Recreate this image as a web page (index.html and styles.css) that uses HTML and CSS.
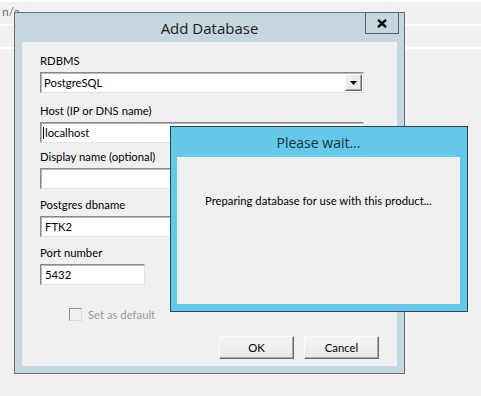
FILE: index.html
```html
<!DOCTYPE html>
<html>
<head>
<meta charset="utf-8">
<link rel="stylesheet" href="styles.css">
</head>
<body>
<div class="desktop">
  <div class="grid-bg">
    <div class="grid-row"><span class="cell-text">n/a</span></div>
    <div class="grid-row"></div>
    <div class="grid-row"></div>
  </div>

  <div class="window add-db">
    <div class="titlebar">
      <span class="title">Add Database</span>
      <span class="close-btn">
        <svg width="10" height="9" viewBox="0 0 10 9"><path d="M1 0.8 L9 8.2 M9 0.8 L1 8.2" stroke="#000" stroke-width="2.3" fill="none"/></svg>
      </span>
    </div>
    <div class="client">
      <div class="field">
        <span class="label">RDBMS</span>
        <div class="combo">
          <span class="combo-text">PostgreSQL</span>
          <span class="drop-btn"><svg width="7" height="4" viewBox="0 0 7 4"><polygon points="0,0 7,0 3.5,4" fill="#000"/></svg></span>
        </div>
      </div>
      <div class="field">
        <span class="label">Host (IP or DNS name)</span>
        <div class="input"><span class="caret"></span>localhost</div>
      </div>
      <div class="field">
        <span class="label">Display name (optional)</span>
        <div class="input"></div>
      </div>
      <div class="field">
        <span class="label">Postgres dbname</span>
        <div class="input">FTK2</div>
      </div>
      <div class="field">
        <span class="label">Port number</span>
        <div class="input input-short">5432</div>
      </div>
      <div class="check-row">
        <span class="checkbox"></span>
        <span class="check-label">Set as default</span>
      </div>
      <div class="buttons">
        <span class="btn">OK</span>
        <span class="btn">Cancel</span>
      </div>
    </div>
  </div>

  <div class="window wait">
    <div class="titlebar wait-titlebar">
      <span class="title wait-title">Please wait...</span>
    </div>
    <div class="client wait-client">
      <span class="message">Preparing database for use with this product...</span>
    </div>
  </div>
</div>
</body>
</html>
```
FILE: styles.css
```css
html, body {
  margin: 0;
  padding: 0;
}

.desktop {
  position: relative;
  width: 481px;
  height: 396px;
  overflow: hidden;
  background: #f0f0f0;
  font-family: "Lato", "Open Sans", sans-serif;
  font-size: 11.3px;
  color: #000;
}

/* background grid rows */
.grid-bg {
  display: flex;
  flex-direction: column;
}

.grid-row {
  height: 24px;
  box-sizing: border-box;
  border-top: 2px solid #ffffff;
}

.grid-row:nth-child(2),
.grid-row:nth-child(3) {
  height: 23px;
}

.cell-text {
  display: block;
  padding: 2px 0 0 2px;
  line-height: 16px;
  font-size: 12px;
  color: #6d6d6d;
}

/* windows */
.window {
  position: absolute;
  box-sizing: border-box;
  display: flex;
  flex-direction: column;
}

.add-db {
  left: 14px;
  top: 12px;
  width: 391px;
  height: 362px;
  border: 1px solid #6a6e70;
  background: #c4d7df;
  padding: 0 7px 7px 7px;
}

.titlebar {
  position: relative;
  height: 29px;
  flex: none;
  display: flex;
  align-items: center;
  justify-content: center;
}

.title {
  font-family: "Open Sans", "Noto Sans", sans-serif;
  font-size: 15px;
  line-height: 20px;
  color: #1c1c1c;
  margin-top: 1px;
}

.close-btn {
  position: absolute;
  right: -2px;
  top: -1px;
  width: 34px;
  height: 22px;
  box-sizing: border-box;
  border: 1px solid #5c6163;
  display: flex;
  align-items: center;
  justify-content: center;
}

.close-btn svg {
  display: block;
  margin-top: 1px;
}

.client {
  flex: 1;
  background: #f0f0f0;
  display: flex;
  flex-direction: column;
  padding: 11px 18px 7px 18px;
}

.field {
  display: flex;
  flex-direction: column;
  margin-bottom: 8px;
}

.field:first-child {
  margin-bottom: 10px;
}

.field:nth-child(2) {
  margin-bottom: 6px;
}

.label {
  line-height: 15px;
  height: 15px;
  margin-bottom: 4px;
  white-space: nowrap;
}

.combo,
.input {
  width: 324px;
  height: 21px;
  box-sizing: border-box;
  background: #fff;
  border: 1px solid;
  border-color: #8a8a8a #e3e3e3 #e3e3e3 #8a8a8a;
  box-shadow: inset 1px 1px 0 #b4b4b4;
  display: flex;
  align-items: center;
  line-height: 15px;
}

.combo {
  padding: 1px;
  justify-content: space-between;
}

.combo-text {
  padding-left: 2px;
}

.input {
  padding-left: 4px;
}

.input-short {
  width: 105px;
}

.caret {
  display: inline-block;
  width: 1px;
  height: 12px;
  background: #000;
  margin-left: -2px;
  margin-right: 1px;
}

.drop-btn {
  width: 17px;
  height: 17px;
  box-sizing: border-box;
  background: #ececec;
  border: 1px solid;
  border-color: #fdfdfd #6a6a6a #6a6a6a #fdfdfd;
  box-shadow: inset -1px -1px 0 #a6a6a6;
  display: flex;
  align-items: center;
  justify-content: center;
}

.drop-btn svg {
  display: block;
}

.check-row {
  display: flex;
  align-items: center;
  margin-top: 14px;
  margin-left: 29px;
  gap: 6px;
}

.checkbox {
  width: 13px;
  height: 13px;
  box-sizing: border-box;
  border: 1px solid;
  border-color: #8c8c8c #dcdcdc #dcdcdc #8c8c8c;
  background: #f0f0f0;
}

.check-label {
  color: #9a9a9a;
  line-height: 15px;
}

.buttons {
  margin-top: auto;
  display: flex;
  justify-content: flex-end;
  gap: 10px;
}

.btn {
  width: 75px;
  height: 23px;
  box-sizing: border-box;
  border: 1px solid;
  border-color: #fbfbfb #6a6a6a #6a6a6a #fbfbfb;
  box-shadow: inset -1px -1px 0 #a8a8a8;
  background: linear-gradient(#f4f4f4, #e9e9e9);
  display: flex;
  align-items: center;
  justify-content: center;
  line-height: 15px;
}

/* please wait window */
.wait {
  left: 170px;
  top: 126px;
  width: 298px;
  height: 186px;
  border: 1px solid #2f4450;
  background: #63c8e9;
  padding: 0 7px 7px 6px;
}

.wait-titlebar {
  height: 30px;
}

.wait-title {
  font-size: 14px;
  color: #1b2f3a;
}

.wait-client {
  padding: 36px 0 10px 28px;
}

.message {
  line-height: 15px;
  white-space: nowrap;
}
```
